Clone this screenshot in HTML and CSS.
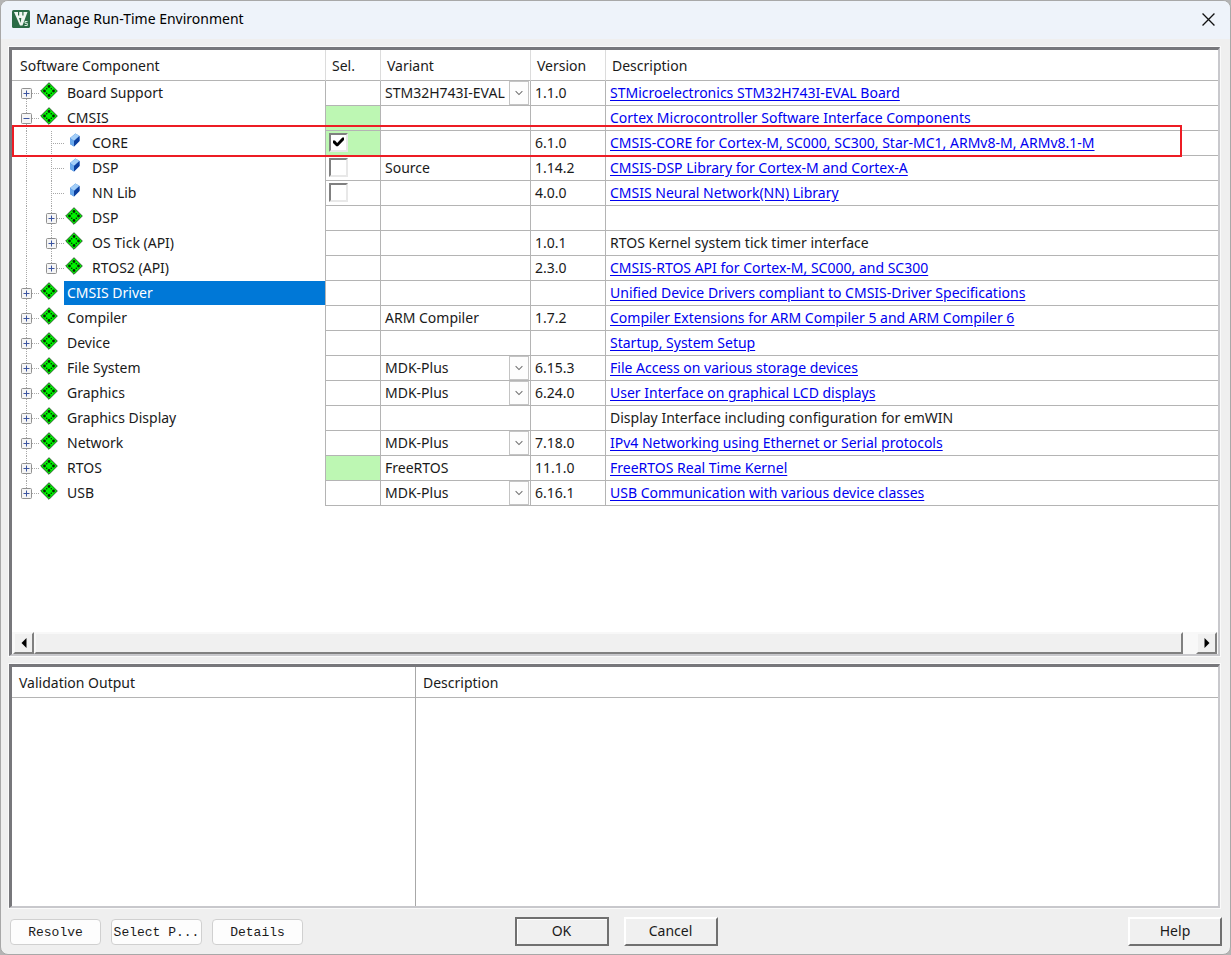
FILE: index.html
```html
<!DOCTYPE html>
<html lang="en">
<head>
<meta charset="utf-8">
<title>Manage Run-Time Environment</title>
<link rel="stylesheet" href="styles.css">
</head>
<body>
<svg class="defs" aria-hidden="true">
  <symbol id="pack" viewBox="0 0 18 18">
    <path d="M9 .7 17.300 9 9 17.300.7 9Z" fill="#00f400" stroke="#2b5a2b" stroke-width="1"/>
    <g fill="#052805"><circle cx="9" cy="4.500" r="1.400"/><circle cx="9" cy="13.500" r="1.400"/><circle cx="4.500" cy="9" r="1.400"/><circle cx="13.500" cy="9" r="1.400"/><circle cx="6.700" cy="6.700" r=".8"/><circle cx="11.300" cy="6.700" r=".8"/><circle cx="6.700" cy="11.300" r=".8"/><circle cx="11.300" cy="11.300" r=".8"/></g>
  </symbol>
  <symbol id="cube" viewBox="0 0 12 14">
    <path d="M1 5 6.500.5 10.500 3v5L5 13.500 1 11Z" fill="#2a6ed0"/>
    <path d="M1 5 6.500.5 10.500 3 5 8Z" fill="#a4cff8"/>
    <path d="M1 5 5 8v5.500L1 11Z" fill="#6aa9ec"/>
    <path d="M5 8l5.500-5v5L5 13.500Z" fill="#0c3f9f"/>
  </symbol>
  <symbol id="plus" viewBox="0 0 11 11">
    <rect x=".5" y=".5" width="10" height="10" rx="1" fill="#f5f5f5" stroke="#919191"/>
    <path d="M2.500 5.500h6M5.500 2.500v6" stroke="#3b54a0"/>
  </symbol>
  <symbol id="minus" viewBox="0 0 11 11">
    <rect x=".5" y=".5" width="10" height="10" rx="1" fill="#f5f5f5" stroke="#919191"/>
    <path d="M2.500 5.500h6" stroke="#3b54a0"/>
  </symbol>
  <symbol id="chev" viewBox="0 0 12 8"><path d="m1.500 1.500 4.500 4.500 4.500-4.500" fill="none" stroke="#707070" stroke-width="1.400"/></symbol>
</svg>

<main class="window">
  <header class="titlebar">
    <svg class="logo" viewBox="0 0 18 18" aria-hidden="true">
      <rect width="18" height="18" rx="1.500" fill="#2a6b45"/>
      <path d="M2 2h13.500L10.500 15.500H8Z" fill="#f0f6f1"/>
      <path d="M6 2v3.500h1.200V2zM10.300 2v3.500h1.200V2zM7 8l1.700 5L9.300 8z" fill="#2a6b45"/>
      <path d="M15.500 11.500H13v1.800h2.300v2.200H12.500" fill="none" stroke="#d5ebdc"/>
    </svg>
    <h1 class="title">Manage Run-Time Environment</h1>
    <button class="close" aria-label="Close"><svg viewBox="0 0 12 12"><path d="m.5.5 11 11M11.500.5l-11 11" stroke="#111" stroke-width="1.200"/></svg></button>
  </header>

  <section class="panel components">
    <div class="highlight"></div>
    <table class="grid">
      <colgroup><col class="c-name"><col class="c-sel"><col class="c-var"><col class="c-ver"><col></colgroup>
      <thead><tr><th>Software Component</th><th>Sel.</th><th>Variant</th><th>Version</th><th>Description</th></tr></thead>
      <tbody>
        <tr><td class="tree"><div class="node"><span class="guide first"><svg class="exp"><use href="#plus"/></svg></span><svg class="pack"><use href="#pack"/></svg><span class="label">Board Support</span></div></td><td></td><td class="pick"><div class="combo"><select aria-label="Board Support variant"><option>STM32H743I-EVAL</option></select><svg class="chev"><use href="#chev"/></svg></div></td><td>1.1.0</td><td><a href="#">STMicroelectronics STM32H743I-EVAL Board</a></td></tr>
        <tr><td class="tree"><div class="node"><span class="guide"><svg class="exp"><use href="#minus"/></svg></span><svg class="pack"><use href="#pack"/></svg><span class="label">CMSIS</span></div></td><td class="on"></td><td></td><td></td><td><a href="#">Cortex Microcontroller Software Interface Components</a></td></tr>
        <tr><td class="tree"><div class="node"><span class="guide pass"></span><span class="guide"></span><svg class="cube"><use href="#cube"/></svg><label class="label" for="s1">CORE</label></div></td><td class="on check"><input type="checkbox" id="s1" checked></td><td></td><td>6.1.0</td><td><a href="#">CMSIS-CORE for Cortex-M, SC000, SC300, Star-MC1, ARMv8-M, ARMv8.1-M</a></td></tr>
        <tr><td class="tree"><div class="node"><span class="guide pass"></span><span class="guide"></span><svg class="cube"><use href="#cube"/></svg><label class="label" for="s2">DSP</label></div></td><td class="check"><input type="checkbox" id="s2"></td><td>Source</td><td>1.14.2</td><td><a href="#">CMSIS-DSP Library for Cortex-M and Cortex-A</a></td></tr>
        <tr><td class="tree"><div class="node"><span class="guide pass"></span><span class="guide"></span><svg class="cube"><use href="#cube"/></svg><label class="label" for="s3">NN Lib</label></div></td><td class="check"><input type="checkbox" id="s3"></td><td></td><td>4.0.0</td><td><a href="#">CMSIS Neural Network(NN) Library</a></td></tr>
        <tr><td class="tree"><div class="node"><span class="guide pass"></span><span class="guide"><svg class="exp"><use href="#plus"/></svg></span><svg class="pack"><use href="#pack"/></svg><span class="label">DSP</span></div></td><td></td><td></td><td></td><td></td></tr>
        <tr><td class="tree"><div class="node"><span class="guide pass"></span><span class="guide"><svg class="exp"><use href="#plus"/></svg></span><svg class="pack"><use href="#pack"/></svg><span class="label">OS Tick (API)</span></div></td><td></td><td></td><td>1.0.1</td><td>RTOS Kernel system tick timer interface</td></tr>
        <tr><td class="tree"><div class="node"><span class="guide pass"></span><span class="guide last"><svg class="exp"><use href="#plus"/></svg></span><svg class="pack"><use href="#pack"/></svg><span class="label">RTOS2 (API)</span></div></td><td></td><td></td><td>2.3.0</td><td><a href="#">CMSIS-RTOS API for Cortex-M, SC000, and SC300</a></td></tr>
        <tr class="selected"><td class="tree"><div class="node"><span class="guide"><svg class="exp"><use href="#plus"/></svg></span><svg class="pack"><use href="#pack"/></svg><span class="label">CMSIS Driver</span></div></td><td></td><td></td><td></td><td><a href="#">Unified Device Drivers compliant to CMSIS-Driver Specifications</a></td></tr>
        <tr><td class="tree"><div class="node"><span class="guide"><svg class="exp"><use href="#plus"/></svg></span><svg class="pack"><use href="#pack"/></svg><span class="label">Compiler</span></div></td><td></td><td>ARM Compiler</td><td>1.7.2</td><td><a href="#">Compiler Extensions for ARM Compiler 5 and ARM Compiler 6</a></td></tr>
        <tr><td class="tree"><div class="node"><span class="guide"><svg class="exp"><use href="#plus"/></svg></span><svg class="pack"><use href="#pack"/></svg><span class="label">Device</span></div></td><td></td><td></td><td></td><td><a href="#">Startup, System Setup</a></td></tr>
        <tr><td class="tree"><div class="node"><span class="guide"><svg class="exp"><use href="#plus"/></svg></span><svg class="pack"><use href="#pack"/></svg><span class="label">File System</span></div></td><td></td><td class="pick"><div class="combo"><select aria-label="File System variant"><option>MDK-Plus</option></select><svg class="chev"><use href="#chev"/></svg></div></td><td>6.15.3</td><td><a href="#">File Access on various storage devices</a></td></tr>
        <tr><td class="tree"><div class="node"><span class="guide"><svg class="exp"><use href="#plus"/></svg></span><svg class="pack"><use href="#pack"/></svg><span class="label">Graphics</span></div></td><td></td><td class="pick"><div class="combo"><select aria-label="Graphics variant"><option>MDK-Plus</option></select><svg class="chev"><use href="#chev"/></svg></div></td><td>6.24.0</td><td><a href="#">User Interface on graphical LCD displays</a></td></tr>
        <tr><td class="tree"><div class="node"><span class="guide"><svg class="exp"><use href="#plus"/></svg></span><svg class="pack"><use href="#pack"/></svg><span class="label">Graphics Display</span></div></td><td></td><td></td><td></td><td>Display Interface including configuration for emWIN</td></tr>
        <tr><td class="tree"><div class="node"><span class="guide"><svg class="exp"><use href="#plus"/></svg></span><svg class="pack"><use href="#pack"/></svg><span class="label">Network</span></div></td><td></td><td class="pick"><div class="combo"><select aria-label="Network variant"><option>MDK-Plus</option></select><svg class="chev"><use href="#chev"/></svg></div></td><td>7.18.0</td><td><a href="#">IPv4 Networking using Ethernet or Serial protocols</a></td></tr>
        <tr><td class="tree"><div class="node"><span class="guide"><svg class="exp"><use href="#plus"/></svg></span><svg class="pack"><use href="#pack"/></svg><span class="label">RTOS</span></div></td><td class="on"></td><td>FreeRTOS</td><td>11.1.0</td><td><a href="#">FreeRTOS Real Time Kernel</a></td></tr>
        <tr><td class="tree"><div class="node"><span class="guide last"><svg class="exp"><use href="#plus"/></svg></span><svg class="pack"><use href="#pack"/></svg><span class="label">USB</span></div></td><td></td><td class="pick"><div class="combo"><select aria-label="USB variant"><option>MDK-Plus</option></select><svg class="chev"><use href="#chev"/></svg></div></td><td>6.16.1</td><td><a href="#">USB Communication with various device classes</a></td></tr>
      </tbody>
    </table>
    <div class="scrollbar">
      <button class="arrow" aria-label="Scroll left"><svg viewBox="0 0 6 10"><path d="M5.500 0v10L.5 5z"/></svg></button>
      <div class="thumb"></div>
      <button class="arrow" aria-label="Scroll right"><svg viewBox="0 0 6 10"><path d="M.5 0v10l5-5z"/></svg></button>
    </div>
  </section>

  <section class="panel output">
    <div class="pane"><h2 class="pane-head">Validation Output</h2></div>
    <div class="pane"><h2 class="pane-head">Description</h2></div>
  </section>

  <footer class="actions">
    <div class="group start"><button class="soft">Resolve</button><button class="soft">Select P...</button><button class="soft">Details</button></div>
    <div class="group"><button class="classic default">OK</button><button class="classic">Cancel</button></div>
    <div class="group end"><button class="classic">Help</button></div>
  </footer>
</main>
</body>
</html>
```
FILE: styles.css
```css
* { box-sizing: border-box; }
body { margin: 0; background: #b4b4b4; color: #1a1a1a; font: 14px/20px "Noto Sans", "Open Sans", sans-serif; }
.defs { position: absolute; width: 0; height: 0; }
button, select, input { font: inherit; color: inherit; margin: 0; padding: 0; }

.window { display: flex; flex-direction: column; min-height: 100vh; overflow: hidden; border: 1px solid #a8a8a8; border-radius: 8px; background: #efefef; }
.titlebar { display: flex; align-items: center; gap: 6px; height: 38px; padding: 0 15px 2px 11px; background: #eef3fa; }
.logo { width: 18px; height: 18px; }
.title { flex: 1; margin: 0; font-size: 14px; font-weight: 400; color: #000; }
.close { display: flex; border: 0; background: none; }
.close svg { width: 13px; height: 13px; }

.panel { display: flex; margin: 8px 10px 0 8px; background: #fff; border: 3px solid; border-color: #77777b #c8c8cc #c8c8cc #77777b; border-width: 3px 2px 2px 3px; outline: 1px solid #fafafa; }
.components { position: relative; flex: 38 1 0; flex-direction: column; }
.output { flex: 15 1 0; }

.grid { width: 100%; table-layout: fixed; border-collapse: separate; border-spacing: 0; }
.c-name { width: 313px; }
.c-sel { width: 55px; }
.c-var { width: 150px; }
.c-ver { width: 75px; }
th { height: 31px; padding: 2px 6px 0; text-align: left; font-weight: 400; border-bottom: 1px solid #b4b4b4; border-left: 1px solid #dcdcdc; }
th:first-child { border-left: 0; padding-left: 8px; }
td { height: 25px; padding: 0 4px 1px; line-height: 20px; white-space: nowrap; border-left: 1px solid #b4b4b4; border-bottom: 1px solid #b4b4b4; }
td.tree { padding: 0 0 0 2px; border: 0; }
td.on { background: #bdf7b3; }
td.check { padding: 0 3px 2px; }
td.pick { padding: 0 1px 0 0; }
a { color: #0000f0; text-decoration: underline; text-underline-offset: 2px; }

.node { display: flex; align-items: flex-start; height: 25px; }
.guide { display: flex; align-items: center; justify-content: center; flex: none; width: 25px; height: 25px;
  background: repeating-linear-gradient(#a8a8a8 0 1px, #fff 1px 2px) 12px 0 / 1px 100% no-repeat,
    repeating-linear-gradient(90deg, #a8a8a8 0 1px, #fff 1px 2px) 12px 12px / 13px 1px no-repeat; }
.guide.first { background-position: 12px 12px, 12px 12px; }
.guide.last { background-size: 1px 12px, 13px 1px; }
.guide.pass { background-size: 1px 100%, 0 0; }
.exp { width: 11px; height: 11px; }
.pack { flex: none; width: 18px; height: 18px; margin: 1px 6px 0 1px; }
.cube { flex: none; width: 12px; height: 14px; margin: 2px 8px 0 5px; }
.label { flex: 1; height: 24px; padding: 0 3px; line-height: 23px; }
.selected .label { background: #0078d7; color: #fff; }

.check input { display: flex; align-items: center; justify-content: center; width: 19px; height: 19px; appearance: none; background: #fff; border: 2px solid; border-color: #808080 #e8e8e8 #e8e8e8 #808080; }
.check input:checked::before { content: ""; width: 11px; height: 10px; background: #000; clip-path: polygon(0 35%, 18% 35%, 38% 60%, 85% 5%, 100% 5%, 100% 30%, 45% 92%, 30% 92%, 0 60%); }

.combo { display: grid; grid-template-columns: 1fr 20px; height: 24px; }
.combo select { grid-area: 1 / 1 / 2 / 3; width: 100%; padding: 0 20px 1px 4px; appearance: none; border: 0; background: none; }
.chev { grid-area: 1 / 2; width: 20px; height: 24px; padding: 8px 3px; border: 1px solid #c4c4c4; background: #fdfdfd; pointer-events: none; }

.highlight { position: absolute; top: 75px; left: 0; right: 36px; height: 32px; border: 2px solid #ed1c24; pointer-events: none; }

.scrollbar { display: flex; height: 22px; margin-top: auto; padding: 0 1px; background: #f8f8f8; }
.arrow { display: flex; align-items: center; justify-content: center; width: 21px; background: #f0f0f0; border: 2px solid; border-color: #f8f8f8 #808080 #808080 #f8f8f8; }
.arrow svg { width: 6px; height: 10px; }
.thumb { flex: 1; margin-right: 13px; background: #f0f0f0; border: 2px solid; border-color: #f8f8f8 #808080 #808080 #f8f8f8; }

.pane { flex: 1; }
.pane:first-child { flex: 0 0 404px; border-right: 1px solid #a8a8a8; }
.pane-head { margin: 0; height: 31px; padding: 1px 7px 0; font-size: 14px; line-height: 30px; font-weight: 400; border-bottom: 1px solid #b4b4b4; }

.actions { display: flex; align-items: center; justify-content: space-between; height: 46px; padding: 0 8px; }
.group { display: flex; flex: none; gap: 15px; }
.group.start, .group.end { flex: 1; }
.group.start { gap: 10px; padding: 1px 0 0 1px; }
.group.end { justify-content: flex-end; }
.soft { width: 91px; height: 26px; padding-top: 2px; border: 1px solid #d0d0d0; border-radius: 4px; background: #fdfdfd; font: 13px/20px "Liberation Mono", monospace; white-space: nowrap; }
.classic { width: 94px; height: 29px; background: #f0f0f0; border: 2px solid; border-color: #fff #707070 #707070 #fff; }
.classic.default { border-color: #707070; box-shadow: inset 1px 1px #fff; }
```
